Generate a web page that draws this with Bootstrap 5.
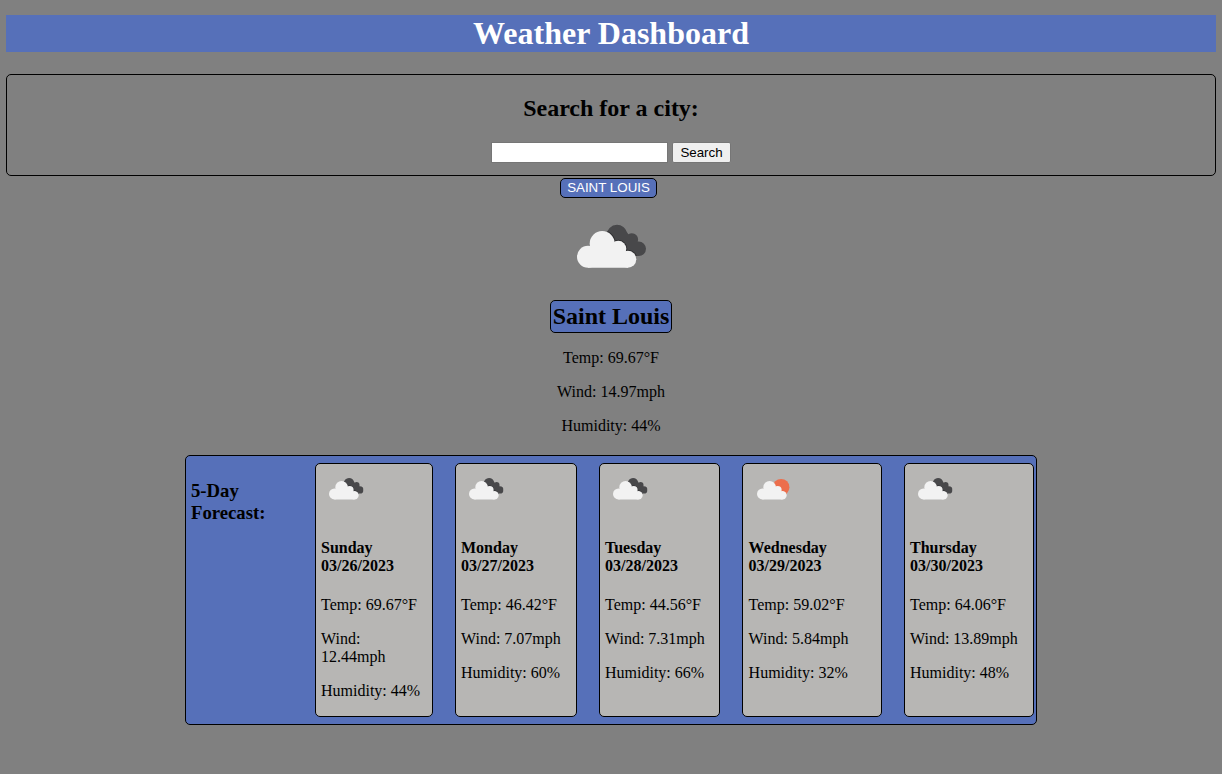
<!DOCTYPE html>
<html lang="en">
<head>
<meta charset="utf-8">
<meta name="viewport" content="width=device-width, initial-scale=1">
<title>Weather Dashboard</title>
<link href="https://cdn.jsdelivr.net/npm/bootstrap@5.3.0/dist/css/bootstrap.min.css" rel="stylesheet">
<style>
  body { background: #808080; color: #000; font: 16px/18px "Liberation Serif", "Times New Roman", serif; padding: 15px 6px 0; }
  h1, h2, h3, h4 { font-weight: 700; color: inherit; }
  .blue-fill { background: #5670b9; }
  .outlined { border: 1px solid #000; border-radius: 5px; }
  .site-title { font-size: 32px; line-height: 37px; margin-bottom: 22px; color: #fff; }
  .search-box { height: 102px; padding-top: 20px; }
  .search-box h2 { font-size: 24px; line-height: 27px; margin-bottom: 20px; }
  .search-row { gap: 4px; font-family: "Liberation Sans", Arial, sans-serif; font-size: 13.333px; }
  .search-row input { width: 177px; height: 21px; border: 1px solid #767676; padding: 1px 2px; background: #fff; border-radius: 0; }
  .search-row button { width: 59px; height: 21px; border: 1px solid #767676; border-radius: 2px; background: #efefef; color: #000; padding: 0; line-height: 17px; }
  .history-btn { width: 97px; height: 20px; margin: 2px 5px 0 0; padding: 0; color: #fff; font: 13.333px/18px "Liberation Sans", Arial, sans-serif; }
  .icon-lg { width: 100px; height: 100px; margin: -1px 0 3px; }
  .city-name { font-size: 24px; line-height: 27px; padding: 2px; margin-bottom: 16px; }
  p { margin: 0 0 16px; }
  .forecast { width: 852px; height: 270px; margin-top: 20px; padding: 7px 2px 7px 5px; }
  .forecast h3 { width: 124px; font-size: 18.72px; line-height: 22px; margin: 17px 0 0; }
  .day { height: 254px; padding: 0 5px; margin-right: 22px; background: #b7b6b4; }
  .day:last-child { margin-right: 0; }
  .day svg { width: 50px; height: 50px; }
  .day h4 { font-size: 16px; line-height: 18px; margin: 25px 0 21px; }
  .w1 { width: 118px; } .w2 { width: 122px; } .w3 { width: 121px; } .w4 { width: 140px; padding-left: 5.6px; } .w5 { width: 130px; }
</style>
</head>
<body>
<svg class="position-absolute" width="0" height="0" aria-hidden="true">
  <clipPath id="backshape">
    <circle cx="56" cy="38.3" r="10.5"/><circle cx="70.9" cy="42.4" r="6.2"/><circle cx="77.7" cy="51.8" r="7.3"/>
    <path d="M46 38L65 34L73 45L77 59H66L50 46Z"/>
  </clipPath>
  <symbol id="front" viewBox="0 0 100 100">
    <circle cx="27" cy="59.8" r="11"/><circle cx="41.2" cy="46.5" r="12.5"/><circle cx="57.3" cy="51.8" r="8"/><circle cx="66.8" cy="62.3" r="8.5"/>
    <path d="M27 50L45 46L58 48L67 60V70.8H27Z"/>
  </symbol>
  <symbol id="clouds" viewBox="0 0 100 100">
    <g clip-path="url(#backshape)">
      <rect width="100" height="100" fill="#48484a"/>
      <use href="#front" fill="#2f2f31" stroke="#2f2f31" stroke-width="2"/>
    </g>
    <use href="#front" fill="#f2f2f2"/>
  </symbol>
  <symbol id="suncloud" viewBox="0 0 100 100">
    <circle cx="64.2" cy="46.5" r="16.7" fill="#ec6e4c"/>
    <use href="#front" fill="#f2f2f2"/>
  </symbol>
</svg>

<h1 class="site-title blue-fill text-center">Weather Dashboard</h1>
<section class="search-box outlined text-center">
  <h2>Search for a city:</h2>
  <div class="search-row d-flex justify-content-center">
    <input type="text" aria-label="City"><button type="button">Search</button>
  </div>
</section>

<main class="d-flex flex-column align-items-center">
  <button type="button" class="history-btn outlined blue-fill">SAINT LOUIS</button>
  <svg class="icon-lg"><use href="#clouds"/></svg>
  <h2 class="city-name outlined blue-fill">Saint Louis</h2>
  <p>Temp: 69.67°F</p>
  <p>Wind: 14.97mph</p>
  <p class="mb-0">Humidity: 44%</p>

  <section class="forecast outlined blue-fill d-flex">
    <h3 class="flex-shrink-0">5-Day<br>Forecast:</h3>
    <article class="day w1 outlined flex-shrink-0"><svg class="d-block"><use href="#clouds"/></svg><h4>Sunday<br>03/26/2023</h4><p>Temp: 69.67°F</p><p>Wind:<br>12.44mph</p><p>Humidity: 44%</p></article>
    <article class="day w2 outlined flex-shrink-0"><svg class="d-block"><use href="#clouds"/></svg><h4>Monday<br>03/27/2023</h4><p>Temp: 46.42°F</p><p>Wind: 7.07mph</p><p>Humidity: 60%</p></article>
    <article class="day w3 outlined flex-shrink-0"><svg class="d-block"><use href="#clouds"/></svg><h4>Tuesday<br>03/28/2023</h4><p>Temp: 44.56°F</p><p>Wind: 7.31mph</p><p>Humidity: 66%</p></article>
    <article class="day w4 outlined flex-shrink-0"><svg class="d-block"><use href="#suncloud"/></svg><h4>Wednesday<br>03/29/2023</h4><p>Temp: 59.02°F</p><p>Wind: 5.84mph</p><p>Humidity: 32%</p></article>
    <article class="day w5 outlined flex-shrink-0"><svg class="d-block"><use href="#clouds"/></svg><h4>Thursday<br>03/30/2023</h4><p>Temp: 64.06°F</p><p>Wind: 13.89mph</p><p>Humidity: 48%</p></article>
  </section>
</main>
<script src="https://cdn.jsdelivr.net/npm/bootstrap@5.3.0/dist/js/bootstrap.bundle.min.js"></script>
</body>
</html>
